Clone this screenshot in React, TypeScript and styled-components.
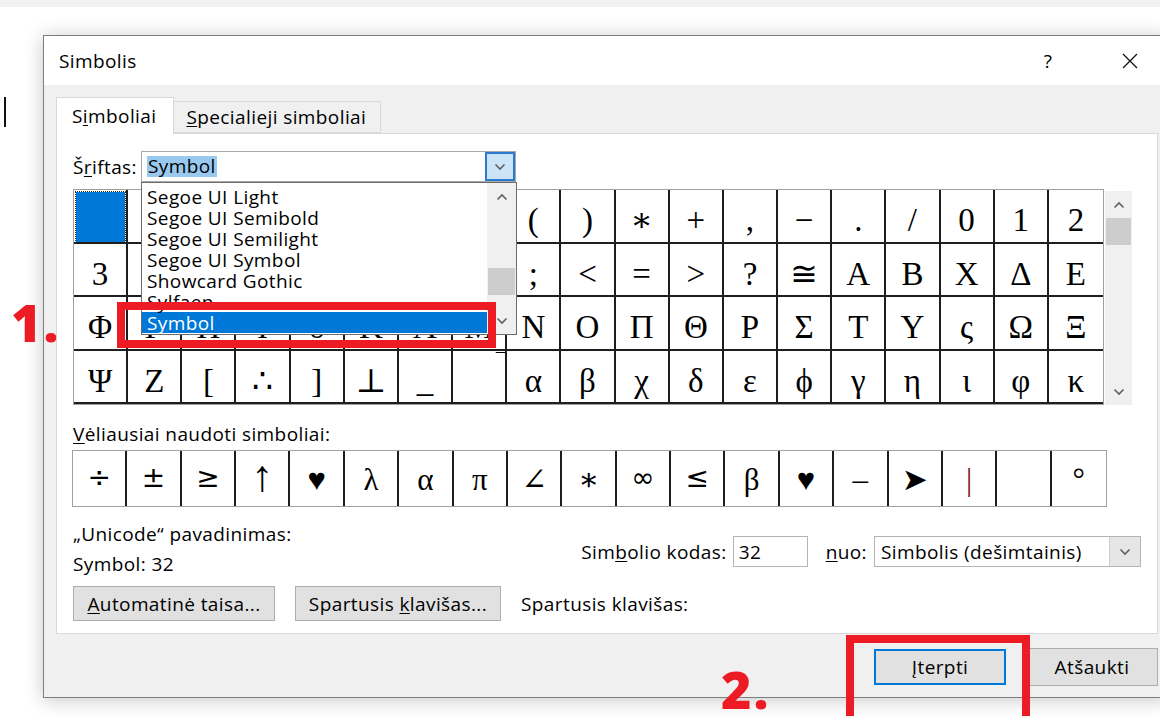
import React from "react";
import styled, { createGlobalStyle } from "styled-components";

const UI_FONT = `"Open Sans", "Noto Sans", "DejaVu Sans", sans-serif`;
const GLYPH_FONT = `"Liberation Serif", "DejaVu Serif", "DejaVu Sans", serif`;
const RED = "#ed1c24";

const GlobalStyle = createGlobalStyle`
  html, body {
    margin: 0;
    padding: 0;
    background: #fff;
  }
  body {
    font-family: ${UI_FONT};
    font-size: 19px;
    letter-spacing: 0.4px;
    color: #000;
  }
`;

// symbol table rows (Symbol font, page 1)
const symbolRows: string[][] = [
	["", "!", "∀", "#", "∃", "%", "&", "∋", "(", ")", "∗", "+", ",", "−", ".", "/", "0", "1", "2"],
	["3", "4", "5", "6", "7", "8", "9", ":", ";", "<", "=", ">", "?", "≅", "Α", "Β", "Χ", "Δ", "Ε"],
	["Φ", "Γ", "Η", "Ι", "ϑ", "Κ", "Λ", "Μ", "Ν", "Ο", "Π", "Θ", "Ρ", "Σ", "Τ", "Υ", "ς", "Ω", "Ξ"],
	["Ψ", "Ζ", "[", "∴", "]", "⊥", "_", "‾", "α", "β", "χ", "δ", "ε", "ϕ", "γ", "η", "ι", "φ", "κ"],
];

// recently used, with the taller sans glyphs flagged
const recentSymbols: { ch: string; tall?: boolean; sans?: boolean }[] = [
	{ ch: "÷", sans: true },
	{ ch: "±", sans: true },
	{ ch: "≥", sans: true },
	{ ch: "↑", tall: true },
	{ ch: "♥" },
	{ ch: "λ" },
	{ ch: "α" },
	{ ch: "π" },
	{ ch: "∠" },
	{ ch: "∗" },
	{ ch: "∞", sans: true },
	{ ch: "≤", sans: true },
	{ ch: "β" },
	{ ch: "♥" },
	{ ch: "–" },
	{ ch: "➤" },
	{ ch: "|" },
	{ ch: "" },
	{ ch: "°" },
];

const fontList = [
	"Segoe UI Light",
	"Segoe UI Semibold",
	"Segoe UI Semilight",
	"Segoe UI Symbol",
	"Showcard Gothic",
	"Sylfaen",
	"Symbol",
];

const Chevron = ({ dir }: { dir: "up" | "down" }) => (
	<svg width="12" height="8" viewBox="0 0 12 8">
		<polyline
			points={dir === "up" ? "1.5,6.5 6,2 10.5,6.5" : "1.5,1.5 6,6 10.5,1.5"}
			fill="none"
			stroke="#606060"
			strokeWidth="1.6"
		/>
	</svg>
);

const App = () => {
	return (
		<>
			<GlobalStyle />
			<Screen>
				<TopStrip />
				<Workspace>
					<Caret />
					<Dialog>
						<TitleBar>
							<Title>Simbolis</Title>
							<TitleButton>?</TitleButton>
							<TitleButton>
								<svg width="16" height="16" viewBox="0 0 16 16">
									<path d="M1 1 L15 15 M15 1 L1 15" stroke="#111" strokeWidth="1.3" />
								</svg>
							</TitleButton>
						</TitleBar>
						<Body>
							<Tabs>
								<Tab $active>
									<span>
										S<Key>i</Key>mboliai
									</span>
								</Tab>
								<Tab>
									<span>
										<Key>S</Key>pecialieji simboliai
									</span>
								</Tab>
							</Tabs>
							<Panel>
								<FontRow>
									<FontLabel>
										Š<Key>r</Key>iftas:
									</FontLabel>
									<FontSelect>
										<Highlight>Symbol</Highlight>
										<DropButton>
											<Chevron dir="down" />
										</DropButton>
										<DropList>
											<ListItems>
												{fontList.map((name) => (
													<ListItem key={name} $selected={name === "Symbol"}>
														{name}
													</ListItem>
												))}
											</ListItems>
											<ListScroll>
												<ArrowSlot>
													<Chevron dir="up" />
												</ArrowSlot>
												<Thumb $top={58} />
												<ArrowSlot $bottom>
													<Chevron dir="down" />
												</ArrowSlot>
											</ListScroll>
										</DropList>
									</FontSelect>
								</FontRow>

								<SymbolArea>
									<SymbolGrid>
										{symbolRows.flat().map((ch, i) => (
											<Cell key={i} $corner={ch === "‾"}>
												{i === 0 ? <SelectedMark /> : ch}
											</Cell>
										))}
									</SymbolGrid>
									<GridScroll>
										<ArrowSlot>
											<Chevron dir="up" />
										</ArrowSlot>
										<Thumb $top={0} />
										<ArrowSlot $bottom>
											<Chevron dir="down" />
										</ArrowSlot>
									</GridScroll>
								</SymbolArea>

								<RecentLabel>
									<Key>V</Key>ėliausiai naudoti simboliai:
								</RecentLabel>
								<RecentGrid>
									{recentSymbols.map((s, i) => (
										<RecentCell
											key={i}
											$tall={s.tall}
											$sans={s.sans}
											$tint={s.ch === "|" ? "#7a1020" : undefined}
										>
											{s.ch}
										</RecentCell>
									))}
								</RecentGrid>

								<InfoRow>
									<NameBlock>
										<Text>„Unicode“ pavadinimas:</Text>
										<Text>Symbol: 32</Text>
									</NameBlock>
									<CodeGroup>
										<Text>
											Sim<Key>b</Key>olio kodas:
										</Text>
										<CodeInput>32</CodeInput>
										<FromLabel>
											<Key>n</Key>uo:
										</FromLabel>
										<FromSelect>
											<span>Simbolis (dešimtainis)</span>
											<FromArrow>
												<Chevron dir="down" />
											</FromArrow>
										</FromSelect>
									</CodeGroup>
								</InfoRow>

								<ButtonRow>
									<Button $w={202}>
										<span>
											<Key>A</Key>utomatinė taisa...
										</span>
									</Button>
									<Button $w={206}>
										<span>
											Spartusis <Key>k</Key>lavišas...
										</span>
									</Button>
									<Text>Spartusis klavišas:</Text>
								</ButtonRow>
							</Panel>
							<Footer>
								<Button $w={132} $h={36} $focused>
									<span>
										<Key>Į</Key>terpti
									</span>
								</Button>
								<Button $w={132} $h={38}>
									Atšaukti
								</Button>
							</Footer>
						</Body>
					</Dialog>
				</Workspace>

				<StepNumber style={{ left: 11, top: 296 }}>1.</StepNumber>
				<StepNumber style={{ left: 721, top: 663 }}>2.</StepNumber>
				<Callout style={{ left: 117, top: 302, width: 379, height: 46 }} />
				<Callout style={{ left: 846, top: 635, width: 184, height: 110 }} />
			</Screen>
		</>
	);
};

const Screen = styled.div`
	position: relative;
	width: 1160px;
	height: 716px;
	overflow: hidden;
	background: #fff;
`;

const TopStrip = styled.div`
	height: 7px;
	background: #f2f2f2;
`;

const Workspace = styled.div`
	display: flex;
	align-items: flex-start;
`;

const Caret = styled.div`
	flex-shrink: 0;
	width: 2px;
	height: 30px;
	margin: 90px 0 0 4px;
	background: #111;
`;

const Dialog = styled.div`
	flex-shrink: 0;
	box-sizing: border-box;
	width: 1127px;
	height: 663px;
	margin: 28px 0 0 37px;
	display: flex;
	flex-direction: column;
	background: #f0f0f0;
	border: 1px solid #7d7d7d;
	box-shadow: 0 2px 18px rgba(0, 0, 0, 0.22);
`;

const TitleBar = styled.div`
	height: 49px;
	display: flex;
	align-items: center;
	padding: 0 16px 0 15px;
	background: #fff;
`;

const Title = styled.div`
	flex: 1;
`;

const TitleButton = styled.div`
	width: 46px;
	display: flex;
	justify-content: center;
	& + & {
		margin-left: 36px;
	}
`;

const Body = styled.div`
	flex: 1;
	display: flex;
	flex-direction: column;
	padding: 12px 11px 0 12px;
`;

const Tabs = styled.div`
	display: flex;
	align-items: flex-end;
	height: 36px;
`;

const Tab = styled.div<{ $active?: boolean }>`
	box-sizing: border-box;
	height: ${(p) => (p.$active ? "37px" : "32px")};
	margin-bottom: ${(p) => (p.$active ? "-1px" : "0")};
	padding: 0 ${(p) => (p.$active ? "17px" : "14px")} 0 ${(p) => (p.$active ? "15px" : "12px")};
	display: flex;
	align-items: center;
	background: ${(p) => (p.$active ? "#fff" : "#f0f0f0")};
	border: 1px solid #d9d9d9;
	border-bottom: ${(p) => (p.$active ? "none" : "1px solid #d9d9d9")};
	border-left: ${(p) => (p.$active ? "1px solid #d9d9d9" : "none")};
	position: relative;
	z-index: ${(p) => (p.$active ? 1 : 0)};
`;

const Key = styled.span`
	text-decoration: underline;
	text-underline-offset: 2px;
`;

const Panel = styled.div`
	box-sizing: border-box;
	height: 501px;
	padding: 17px 0 0 16px;
	background: #fff;
	border: 1px solid #d9d9d9;
`;

const FontRow = styled.div`
	display: flex;
	align-items: center;
	height: 31px;
`;

const FontLabel = styled.div`
	width: 68px;
`;

const FontSelect = styled.div`
	position: relative;
	box-sizing: border-box;
	width: 375px;
	height: 31px;
	display: flex;
	align-items: center;
	padding-left: 5px;
	border: 1px solid #a8a8a8;
`;

const Highlight = styled.span`
	line-height: 21px;
	padding: 0 1px;
	background: #99c9ef;
`;

const DropButton = styled.div`
	box-sizing: border-box;
	margin-left: auto;
	width: 30px;
	height: 29px;
	display: flex;
	align-items: center;
	justify-content: center;
	background: #cce4f7;
	border: 2px solid #2a7bd0;
`;

const DropList = styled.div`
	position: absolute;
	top: 30px;
	left: -1px;
	box-sizing: border-box;
	width: 376px;
	height: 153px;
	display: flex;
	background: #fff;
	border: 1px solid #6d6d6d;
	z-index: 5;
`;

const ListItems = styled.div`
	flex: 1;
	padding-top: 3px;
	overflow: hidden;
`;

const ListItem = styled.div<{ $selected?: boolean }>`
	height: 21px;
	line-height: 23px;
	padding-left: 5px;
	white-space: nowrap;
	color: ${(p) => (p.$selected ? "#fff" : "#000")};
	background: ${(p) => (p.$selected ? "#0078d7" : "transparent")};
`;

const ListScroll = styled.div`
	position: relative;
	width: 29px;
	background: #f0f0f0;
`;

const ArrowSlot = styled.div<{ $bottom?: boolean }>`
	position: absolute;
	left: 0;
	right: 0;
	${(p) => (p.$bottom ? "bottom: 0;" : "top: 0;")}
	height: 27px;
	display: flex;
	align-items: center;
	justify-content: center;
`;

const Thumb = styled.div<{ $top: number }>`
	position: absolute;
	left: 1px;
	right: 1px;
	top: ${(p) => 27 + p.$top}px;
	height: 27px;
	background: #cdcdcd;
`;

const SymbolArea = styled.div`
	display: flex;
	margin-top: 7px;
`;

const SymbolGrid = styled.div`
	box-sizing: border-box;
	width: 1031px;
	height: 216px;
	display: grid;
	grid-template-columns: repeat(19, 1fr);
	grid-template-rows: repeat(4, 1fr);
	border: 1px solid #a0a0a0;
	letter-spacing: 0;
`;

const Cell = styled.div<{ $corner?: boolean }>`
	position: relative;
	overflow: hidden;
	border-right: 2px solid #1e1e1e;
	border-bottom: 2px solid #1e1e1e;
	font-family: ${GLYPH_FONT};
	font-size: ${(p) => (p.$corner ? "26px" : "33px")};
	line-height: 1;
	padding-top: ${(p) => (p.$corner ? "0" : "14px")};
	text-align: ${(p) => (p.$corner ? "right" : "center")};
	&:nth-child(19n) {
		border-right: none;
	}
`;

const SelectedMark = styled.div`
	position: absolute;
	inset: 2px 1px 0 2px;
	background: #0078d7;
	outline: 1px dotted #3a2a10;
`;

const GridScroll = styled.div`
	position: relative;
	width: 27px;
	height: 214px;
	margin: 2px 0 0 1px;
	background: #f0f0f0;
`;

const RecentLabel = styled.div`
	margin-top: 19px;
	line-height: 20px;
`;

const RecentGrid = styled.div`
	box-sizing: border-box;
	width: 1035px;
	height: 57px;
	margin: 6px 0 0 -1px;
	display: grid;
	grid-template-columns: repeat(19, 1fr);
	border: 1px solid #a0a0a0;
	letter-spacing: 0;
`;

const RecentCell = styled.div<{ $tint?: string; $tall?: boolean; $sans?: boolean }>`
	border-right: 2px solid #1e1e1e;
	font-family: ${(p) => (p.$sans ? `"DejaVu Sans", sans-serif` : GLYPH_FONT)};
	font-size: ${(p) => (p.$tall ? "44px" : p.$sans ? "28px" : "31px")};
	line-height: 1;
	padding-top: ${(p) => (p.$tall ? "4px" : "13px")};
	text-align: center;
	color: ${(p) => p.$tint ?? "#000"};
	&:last-child {
		border-right: none;
	}
`;

const InfoRow = styled.div`
	display: flex;
	justify-content: space-between;
	align-items: flex-start;
	margin-top: 17px;
	padding-right: 16px;
`;

const NameBlock = styled.div`
	display: flex;
	flex-direction: column;
	gap: 10px;
`;

const Text = styled.div`
	line-height: 20px;
	white-space: nowrap;
`;

const CodeGroup = styled.div`
	display: flex;
	align-items: center;
	margin-top: 12px;
`;

const CodeInput = styled.div`
	box-sizing: border-box;
	width: 75px;
	height: 31px;
	margin-left: 6px;
	padding-left: 5px;
	display: flex;
	align-items: center;
	border: 1px solid #b4b4b4;
`;

const FromLabel = styled(Text)`
	margin: 0 7px 0 18px;
`;

const FromSelect = styled.div`
	box-sizing: border-box;
	width: 267px;
	height: 31px;
	display: flex;
	align-items: center;
	padding-left: 6px;
	border: 1px solid #b4b4b4;
	span {
		flex: 1;
		white-space: nowrap;
	}
`;

const FromArrow = styled.div`
	width: 30px;
	height: 100%;
	display: flex;
	align-items: center;
	justify-content: center;
	background: #e6e6e6;
	border-left: 1px solid #cfcfcf;
`;

const ButtonRow = styled.div`
	display: flex;
	align-items: center;
	gap: 20px;
	margin-top: 12px;
`;

const Button = styled.div<{ $w: number; $h?: number; $focused?: boolean }>`
	box-sizing: border-box;
	width: ${(p) => p.$w}px;
	height: ${(p) => p.$h ?? 35}px;
	display: flex;
	align-items: center;
	justify-content: center;
	white-space: nowrap;
	background: #e1e1e1;
	border: ${(p) => (p.$focused ? "2px solid #0078d7" : "1px solid #adadad")};
`;

const Footer = styled.div`
	display: flex;
	justify-content: flex-end;
	align-items: center;
	gap: 20px;
	padding-top: 14px;
`;

const StepNumber = styled.div`
	position: absolute;
	z-index: 10;
	font-family: "Open Sans", "Noto Sans", sans-serif;
	font-weight: 800;
	font-size: 52px;
	letter-spacing: 2px;
	line-height: 1;
	color: ${RED};
`;

const Callout = styled.div`
	position: absolute;
	z-index: 10;
	box-sizing: border-box;
	border: 8px solid ${RED};
`;

export default App;
